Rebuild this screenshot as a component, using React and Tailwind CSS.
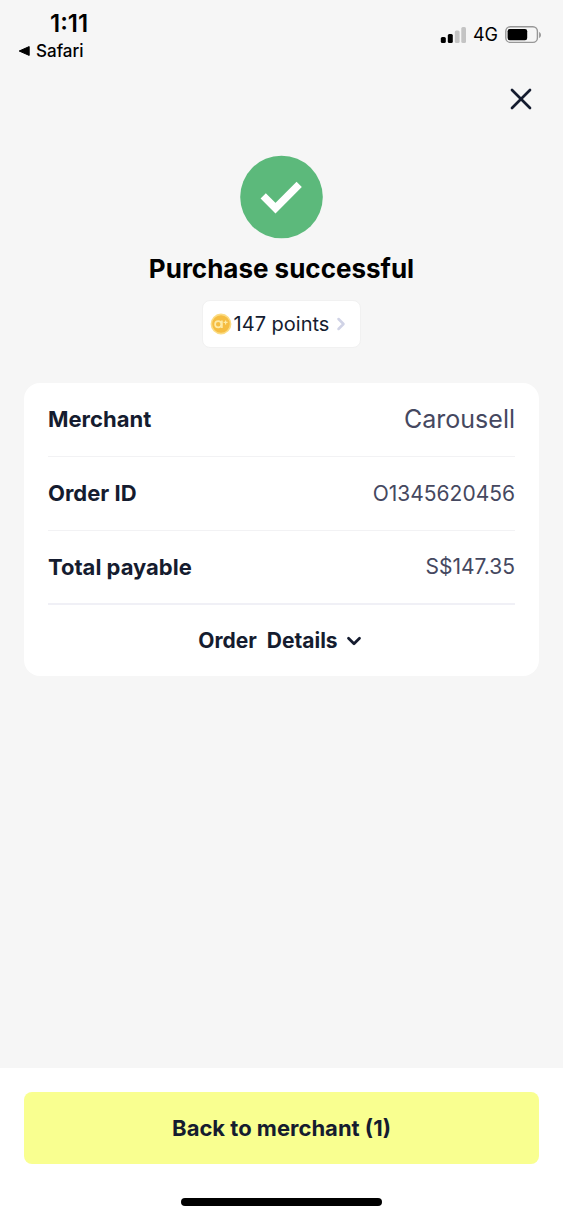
import { ChevronDown, ChevronRight, X } from "lucide-react";

const rows = [
  { label: "Merchant", value: "Carousell", size: "text-[25px]", border: "border-b border-[#f2f2f4]" },
  { label: "Order ID", value: "O1345620456", size: "text-[21px]", border: "border-b border-[#f2f2f4]" },
  { label: "Total payable", value: "S$147.35", size: "text-[21px]", border: "border-b-2 border-[#f0f0f6]" },
];

function StatusBar() {
  return (
    <header className="flex h-16 justify-between pr-[21px] pl-[18px] text-black">
      <div className="pt-3">
        <p className="pl-8 text-[24px] leading-6 font-semibold">1:11</p>
        <a href="#safari" className="mt-1 flex items-center gap-[6px] text-[17px] leading-[22px] font-medium">
          <svg width="12" height="10" viewBox="0 0 12 10" aria-hidden="true">
            <path d="M11.2 0.6v8.8L1.2 5z" fill="currentColor" stroke="currentColor" strokeLinejoin="round" />
          </svg>
          Safari
        </a>
      </div>

      <div className="flex items-center gap-[7px] pt-[5px]">
        <svg width="26" height="16" viewBox="0 0 26 16" aria-hidden="true">
          <rect x="0.8" y="10" width="5" height="6" rx="1.5" />
          <rect x="7.8" y="7" width="5" height="9" rx="1.5" />
          <rect x="14.8" y="3.5" width="4.8" height="12.5" rx="1.5" fill="#c4c4c4" />
          <rect x="21.3" y="0" width="4.7" height="16" rx="1.5" fill="#c4c4c4" />
        </svg>
        <span className="text-[18px] leading-6">4G</span>
        <svg width="37" height="18" viewBox="0 0 37 18" aria-hidden="true">
          <rect x="0.8" y="0.8" width="31.6" height="15.6" rx="4.5" fill="none" stroke="#979797" strokeWidth="1.4" />
          <rect x="2.6" y="3" width="19.6" height="11.2" rx="2.2" />
          <path d="M34.2 6v6c2.2-1 2.2-5 0-6z" fill="#8c8c8c" />
        </svg>
      </div>
    </header>
  );
}

function PointsCoin() {
  return (
    <svg width="22" height="22" viewBox="0 0 22 22" fill="none" aria-hidden="true">
      <circle cx="11" cy="11" r="9.6" fill="#f5bd42" stroke="#fbdc84" strokeWidth="1.6" />
      <circle cx="8.2" cy="11.2" r="3.1" stroke="#fdeaa6" strokeWidth="1.7" />
      <path d="M11.9 7.4v7.6" stroke="#fdeaa6" strokeWidth="1.7" />
      <path d="M15.6 7.4v4M13.6 9.4h4" stroke="#fdeaa6" strokeWidth="1.2" />
    </svg>
  );
}

export default function App() {
  return (
    <div className="flex min-h-screen flex-col bg-[#f6f6f6] font-['Inter',sans-serif] text-[#151c2f]">
      <StatusBar />

      <main className="flex flex-1 flex-col px-6">
        <button className="mt-[17px] cursor-pointer self-end" aria-label="Close">
          <X size={36} strokeWidth={1.8} />
        </button>

        <svg className="mt-[38px] self-center" width="83" height="84" viewBox="0 0 83 84" aria-hidden="true">
          <circle cx="41.5" cy="42" r="41.3" fill="#5cb97b" />
          <path d="M23.2 40.8L35.5 53.2L59.2 29.3" fill="none" stroke="#fff" strokeWidth="7.4" />
        </svg>

        <h1 className="mt-3 text-center text-[26px] leading-9 font-bold text-black">Purchase successful</h1>

        <button className="mt-[13px] flex h-12 cursor-pointer items-center self-center rounded-lg border border-[#f1f1f1] bg-white pr-[9px] pl-[7px] text-[20px]">
          <PointsCoin />
          <span className="pl-[2px]">147 points</span>
          <ChevronRight className="ml-[2px] text-[#d0d3e6]" size={20} strokeWidth={3} />
        </button>

        <section className="mt-[35px] rounded-2xl bg-white px-6">
          <dl>
            {rows.map((row) => (
              <div key={row.label} className={`flex h-[74px] items-center justify-between ${row.border}`}>
                <dt className="text-[22px] font-bold">{row.label}</dt>
                <dd className={`text-[#454860] ${row.size}`}>{row.value}</dd>
              </div>
            ))}
          </dl>
          <button className="flex h-[71px] w-full cursor-pointer items-center justify-center gap-[5px] text-[21px] font-bold">
            <span className="whitespace-pre">Order  Details</span>
            <ChevronDown size={22} strokeWidth={3} />
          </button>
        </section>
      </main>

      <footer className="flex flex-col bg-white px-6 pt-6 pb-3">
        <button className="h-[72px] cursor-pointer rounded-lg bg-[#f9ff90] text-[22px] font-bold">
          Back to merchant (1)
        </button>
        <div className="mt-[34px] h-2 w-[201px] self-center rounded-full bg-black" />
      </footer>
    </div>
  );
}
